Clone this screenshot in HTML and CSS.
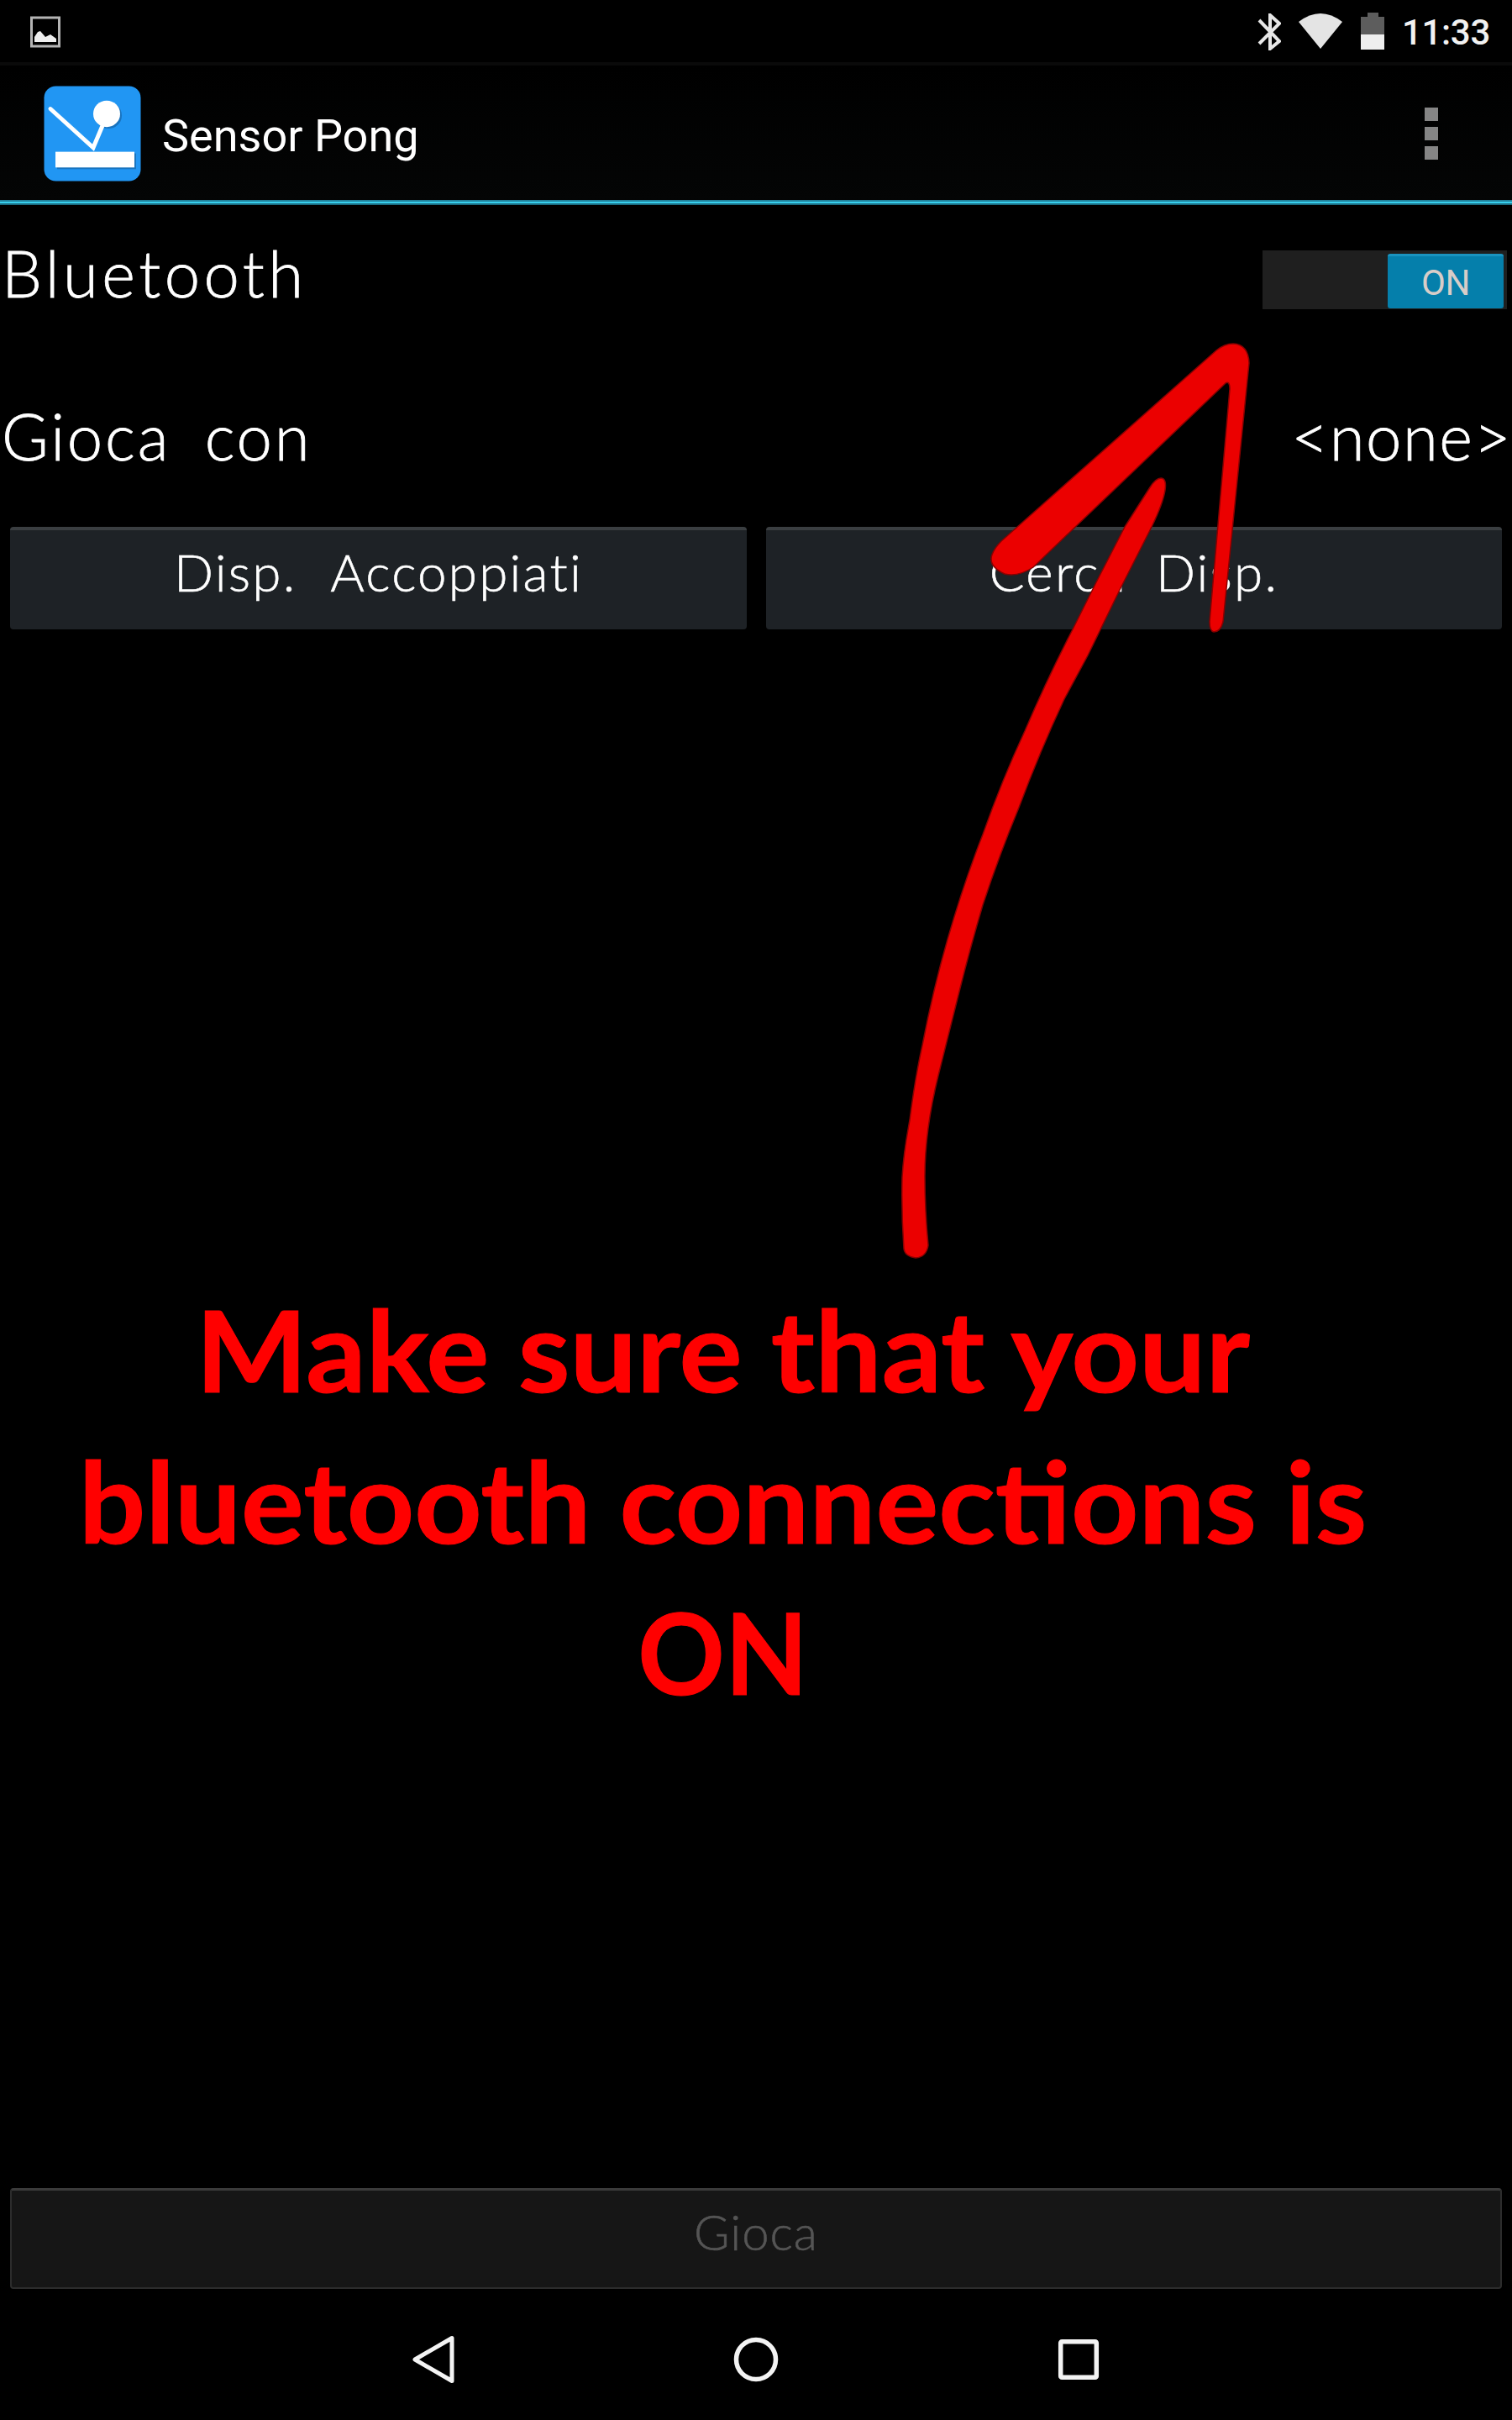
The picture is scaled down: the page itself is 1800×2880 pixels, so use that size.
FILE: index.html
```html
<!DOCTYPE html>
<html lang="it">
<head>
<meta charset="utf-8">
<title>Sensor Pong</title>
<link rel="stylesheet" href="styles.css">
</head>
<body>
<div class="screen">
  <header class="status-bar">
    <svg class="status-image" width="36" height="38" viewBox="0 0 36 38"><rect x="1.5" y="2" width="33" height="34" fill="none" stroke="#b4b4b4" stroke-width="3"/><path d="M5 31V25L9 19L12 18L18 25L24 22L31 27V31Z" fill="#eee"/></svg>
    <div class="status-icons">
      <svg class="bt" width="28" height="44" viewBox="0 0 28 44"><path d="M2 8L26 33L15 42V2L26 12L2 36" fill="none" stroke="#e6e6e6" stroke-width="4"/></svg>
      <svg class="wifi" width="52" height="42" viewBox="0 0 52 42"><path d="M0 10Q26 -10 52 10L26 42Z" fill="#e4e4e4"/></svg>
      <svg class="battery" width="28" height="44" viewBox="0 0 28 44"><path d="M8 0H21V5H28V26H0V5H8Z" fill="#5d5d5d"/><path d="M0 26H28V44H0Z" fill="#eee"/></svg>
      <span class="clock">11:33</span>
    </div>
  </header>

  <div class="action-bar">
    <svg class="app-icon" width="116" height="114" viewBox="0 0 116 116" preserveAspectRatio="none"><rect x=".5" y=".5" width="115" height="115" rx="14" fill="#2196f3"/><g transform="translate(2 2)" fill="#1766aa" opacity=".7"><circle cx="75" cy="34" r="16"/><rect x="14" y="80" width="94" height="19"/></g><path d="M8 28L59 75L71 46" fill="none" stroke="#fff" stroke-width="5" stroke-linecap="round" stroke-linejoin="miter"/><circle cx="75" cy="34" r="16" fill="#fff"/><rect x="14" y="80" width="94" height="19" fill="#fff"/></svg>
    <h1 class="title">Sensor Pong</h1>
    <div class="overflow"><i></i><i></i><i></i></div>
  </div>

  <main class="content">
    <div class="row row-bluetooth">
      <span class="label label-bluetooth">Bluetooth</span>
      <div class="switch"><div class="thumb">ON</div></div>
    </div>
    <div class="row row-opponent">
      <span class="label label-opponent">Gioca con</span>
      <span class="label label-none">&lt;none&gt;</span>
    </div>
    <div class="buttons">
      <div class="button"><span class="paired">Disp. Accoppiati</span></div>
      <div class="button"><span class="search">Cerca Disp.</span></div>
    </div>
    <div class="callout">
      <div class="line line-1">Make sure that your</div>
      <div class="line line-2">bluetooth connections is</div>
      <div class="line line-3">ON</div>
    </div>
    <div class="button play"><span class="play-text">Gioca</span></div>
  </main>

  <nav class="nav-bar">
    <svg width="60" height="60" viewBox="0 0 60 60"><path d="M52 4.500V55.500L8 30Z" fill="none" stroke="#f4f4f4" stroke-width="5" stroke-linejoin="round"/></svg>
    <svg width="60" height="60" viewBox="0 0 60 60"><circle cx="30" cy="30" r="23.500" fill="none" stroke="#f4f4f4" stroke-width="5.500"/></svg>
    <svg width="60" height="60" viewBox="0 0 60 60"><rect x="8.700" y="8.700" width="42.600" height="42.600" rx="1.500" fill="none" stroke="#f4f4f4" stroke-width="5.500"/></svg>
  </nav>

  <svg class="arrow" width="1800" height="2880" viewBox="0 0 1800 2880">
    <g fill="#eb0000" stroke="#8a0000" stroke-width="1.500" stroke-linejoin="round">
      <path d="M1448 417Q1458 409 1468 409Q1486 410 1487 432L1456 740Q1453 752 1445 752Q1440 751 1440 740L1464 463Q1464 453 1459 456L1230 675Q1212 687 1196 683Q1176 674 1181 660Q1184 652 1192 644Z"/>
      <path d="M1382 569C1391 569 1390 588 1371 627L1333 702L1295 780L1267 832Q1238 894 1213 961Q1189 1019 1170 1077Q1155 1128 1143 1176L1117 1280Q1101 1345 1101 1400Q1101 1440 1105 1482Q1103 1496 1090 1497Q1077 1495 1076 1486Q1073 1444 1074 1401C1076 1368 1080 1350 1083 1333Q1089 1285 1098 1244Q1111 1177 1128 1118Q1147 1052 1170 993Q1193 928 1220 870Q1247 807 1277 749L1305 693L1339 627L1369 580Q1376 569 1382 569Z"/>
    </g>
  </svg>
</div>
</body>
</html>
```
FILE: styles.css
```css
* { box-sizing: border-box; }
body { margin: 0; background: #000; }
svg { display: block; }
.screen {
  position: relative;
  width: 1800px;
  height: 2880px;
  overflow: hidden;
  display: flex;
  flex-direction: column;
  background: #000;
  color: #fff;
  font-family: Roboto, sans-serif;
}
.status-bar {
  height: 78px;
  flex: none;
  display: flex;
  justify-content: space-between;
  padding: 0 26px 0 36px;
  border-bottom: 4px solid #0a0a0a;
}
.status-image { margin-top: 19px; }
.status-icons { display: flex; align-items: flex-start; }
.bt { margin: 16px 21px 0 0; }
.wifi { margin: 16px 22px 0 0; }
.battery { margin: 15px 21px 0 0; }
.clock { font-size: 42px; line-height: 50px; margin-top: 14px; color: #f2f2f2; font-weight: 500; letter-spacing: -.3px; }
.action-bar {
  height: 166px;
  flex: none;
  display: flex;
  align-items: flex-start;
  padding: 23px 88px 0 52px;
  background: linear-gradient(#000, #040505);
  border-bottom: 2px solid #1b6b80;
  box-shadow: inset 0 -2px #38d0ee, inset 0 -4px #22829c;
}
.app-icon { margin-top: 1px; }
.title { margin: 29px 0 0 25px; font-size: 54px; line-height: 64px; font-weight: 400; }
.overflow { margin: 27px 0 0 auto; display: grid; gap: 7px; }
.overflow i { width: 16px; height: 16px; background: #858585; }
.content { flex: 1; display: flex; flex-direction: column; }
.row { display: flex; justify-content: space-between; align-items: flex-start; padding: 0 6px 0 2px; }
.row-bluetooth { height: 196px; padding-top: 36px; }
.row-opponent { height: 187px; padding-top: 34px; padding-right: 0; }
.label { font-family: Lato, sans-serif; font-weight: 300; font-size: 76px; line-height: 90px; white-space: pre; -webkit-text-stroke: .8px currentColor; }
.label-bluetooth { letter-spacing: 4.500px; }
.label-opponent { letter-spacing: 2.800px; word-spacing: 17px; }
.label-none { letter-spacing: 1.500px; }
.switch { margin-top: 18px; width: 291px; height: 70px; background: #1f1f1f; padding: 4px 4px 1px; display: flex; justify-content: flex-end; }
.thumb { width: 138px; height: 65px; border-radius: 3px; background: #057fab; border-top: 3px solid #1a93bf; font-size: 42px; line-height: 64px; text-align: center; color: #d8cdc8; font-weight: 400; letter-spacing: -.5px; }
.buttons { display: grid; grid-template-columns: 877px 876px; gap: 23px; padding-left: 12px; }
.button {
  height: 122px;
  border-radius: 4px;
  background: #1e2226;
  border-top: 4px solid #3a3e41;
  display: flex;
  justify-content: center;
  font-family: Lato, sans-serif;
  font-weight: 300;
  font-size: 62px;
  line-height: 74px;
  padding-top: 12px;
  white-space: pre;
  -webkit-text-stroke: .6px currentColor;
}
.paired { letter-spacing: 2.200px; word-spacing: 23px; }
.search { letter-spacing: 2.200px; word-spacing: 15px; }
.callout {
  flex: 1;
  padding-top: 766px;
  width: 1721px;
  color: #f00;
  font-family: Lato, sans-serif;
  font-weight: 700;
  font-size: 135px;
  line-height: 180px;
  text-align: center;
  white-space: nowrap;
  -webkit-text-stroke: 1px currentColor;
}
.line { height: 180px; }
.line-1 { transform: scaleX(1.043); }
.line-2 { transform: scaleX(1.038); }
.line-3 { transform: scaleX(.95); }
.play { margin: 0 12px; height: 120px; background: #161616; border: 2px solid #2c2c2c; border-top: 3px solid #3b3b3b; color: #555; font-size: 58px; }
.play-text { letter-spacing: 1px; }
.nav-bar { height: 156px; flex: none; display: flex; justify-content: center; gap: 324px; padding-top: 54px; }
.arrow { position: absolute; left: 0; top: 0; }
```
